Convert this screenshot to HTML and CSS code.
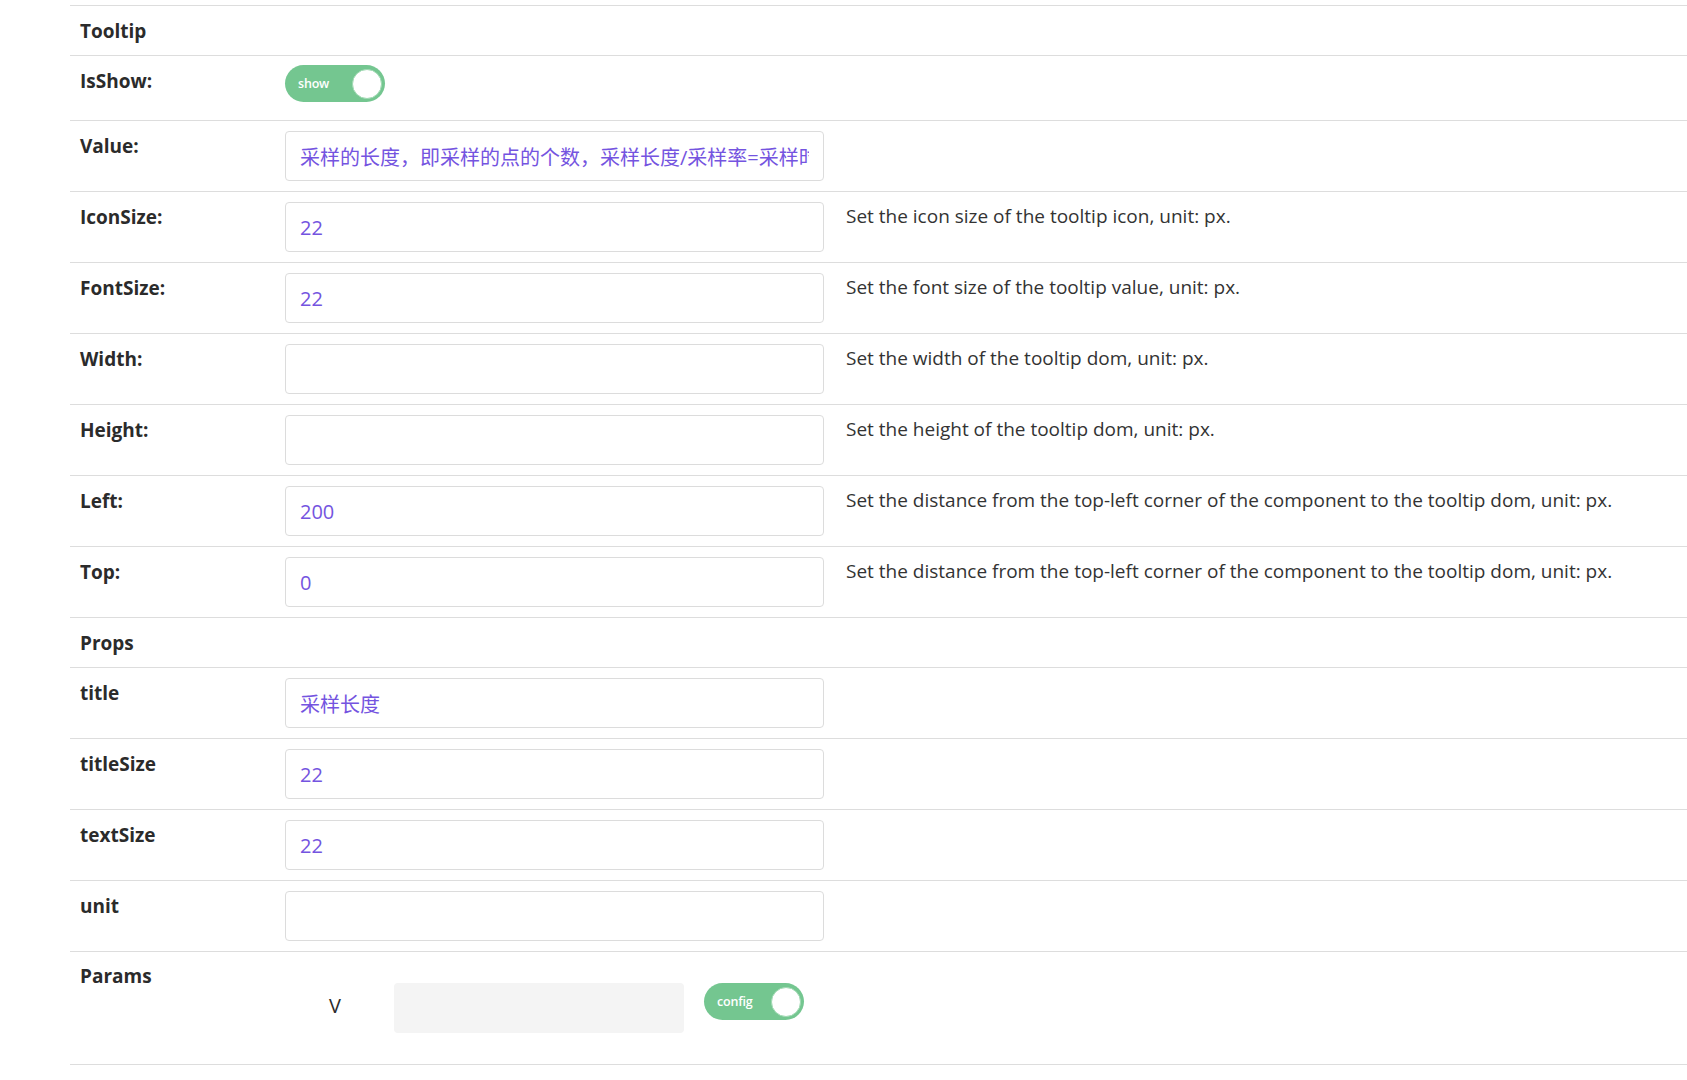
FILE: index.html
```html
<!DOCTYPE html>
<html lang="en">
<head>
<meta charset="utf-8">
<title>Tooltip config</title>
<link rel="stylesheet" href="styles.css">
</head>
<body>
<div class="panel">
  <div class="row head"><div class="label">Tooltip</div></div>
  <div class="row switch-row">
    <div class="label">IsShow:</div>
    <div class="ctrl"><span class="toggle"><span class="toggle-text">show</span><span class="knob"></span></span></div>
  </div>
  <div class="row">
    <div class="label">Value:</div>
    <div class="ctrl"><input class="field" type="text" value="采样的长度，即采样的点的个数，采样长度/采样率=采样时长"></div>
  </div>
  <div class="row">
    <div class="label">IconSize:</div>
    <div class="ctrl"><input class="field" type="text" value="22"></div>
    <div class="desc">Set the icon size of the tooltip icon, unit: px.</div>
  </div>
  <div class="row">
    <div class="label">FontSize:</div>
    <div class="ctrl"><input class="field" type="text" value="22"></div>
    <div class="desc">Set the font size of the tooltip value, unit: px.</div>
  </div>
  <div class="row">
    <div class="label">Width:</div>
    <div class="ctrl"><input class="field" type="text" value=""></div>
    <div class="desc">Set the width of the tooltip dom, unit: px.</div>
  </div>
  <div class="row">
    <div class="label">Height:</div>
    <div class="ctrl"><input class="field" type="text" value=""></div>
    <div class="desc">Set the height of the tooltip dom, unit: px.</div>
  </div>
  <div class="row">
    <div class="label">Left:</div>
    <div class="ctrl"><input class="field" type="text" value="200"></div>
    <div class="desc">Set the distance from the top-left corner of the component to the tooltip dom, unit: px.</div>
  </div>
  <div class="row">
    <div class="label">Top:</div>
    <div class="ctrl"><input class="field" type="text" value="0"></div>
    <div class="desc">Set the distance from the top-left corner of the component to the tooltip dom, unit: px.</div>
  </div>
  <div class="row head"><div class="label">Props</div></div>
  <div class="row">
    <div class="label">title</div>
    <div class="ctrl"><input class="field" type="text" value="采样长度"></div>
  </div>
  <div class="row">
    <div class="label">titleSize</div>
    <div class="ctrl"><input class="field" type="text" value="22"></div>
  </div>
  <div class="row">
    <div class="label">textSize</div>
    <div class="ctrl"><input class="field" type="text" value="22"></div>
  </div>
  <div class="row">
    <div class="label">unit</div>
    <div class="ctrl"><input class="field" type="text" value=""></div>
  </div>
  <div class="row params">
    <div class="label">Params</div>
    <div class="param-line">
      <span class="param-name">V</span>
      <span class="param-box"></span>
      <span class="toggle"><span class="toggle-text">config</span><span class="knob"></span></span>
    </div>
  </div>
</div>
</body>
</html>
```

FILE: styles.css
```css
html, body {
  margin: 0;
  padding: 0;
  background: #ffffff;
}
body {
  font-family: "Open Sans", "Noto Sans CJK SC", sans-serif;
  color: #333333;
  overflow: hidden;
}
.panel {
  margin-left: 70px;
  padding-top: 5px;
}
.row {
  display: flex;
  align-items: flex-start;
  border-top: 1px solid #dddddd;
  height: 70px;
  box-sizing: content-box;
}
.panel > .row:last-child {
  border-bottom: 1px solid #dddddd;
}
.row.head {
  height: 49px;
}
.row.switch-row {
  height: 64px;
}
.row.params {
  height: 112px;
}
.label {
  width: 205px;
  padding: 12px 0 0 10px;
  font-size: 19px;
  font-weight: 700;
  line-height: 26px;
  color: #2b2b2b;
}
.row.head .label {
  padding-top: 12px;
}
.row.params .label {
  padding-top: 11px;
}
.ctrl {
  padding-top: 10px;
  width: 539px;
}
.field {
  display: block;
  width: 539px;
  height: 50px;
  box-sizing: border-box;
  border: 1px solid #dcdcdc;
  border-radius: 4px;
  padding: 0 14px;
  font-family: "Open Sans", "Noto Sans CJK SC", sans-serif;
  font-size: 20px;
  color: #7454e0;
  background: #fff;
  outline: none;
}
.desc {
  padding: 11px 0 0 22px;
  font-size: 19px;
  line-height: 26px;
  color: #333333;
  white-space: nowrap;
}
.toggle {
  display: inline-flex;
  align-items: center;
  justify-content: space-between;
  width: 100px;
  height: 37px;
  box-sizing: border-box;
  padding: 0 3px 0 13px;
  border-radius: 19px;
  background: #74c690;
}
.toggle-text {
  color: #ffffff;
  font-size: 12.5px;
  font-weight: 600;
  letter-spacing: -0.2px;
}
.knob {
  width: 30px;
  height: 30px;
  box-sizing: border-box;
  border-radius: 50%;
  background: #ffffff;
  border: 1px solid #9fd9b2;
}
.switch-row .ctrl {
  padding-top: 9px;
}
.param-line {
  display: flex;
  align-items: flex-start;
  padding-top: 31px;
}
.param-name {
  width: 100px;
  text-align: center;
  font-size: 20px;
  line-height: 46px;
  color: #2b2b2b;
}
.param-box {
  display: block;
  width: 290px;
  height: 50px;
  margin-left: 9px;
  margin-right: 20px;
  background: #f4f4f4;
  border-radius: 4px;
}
```
